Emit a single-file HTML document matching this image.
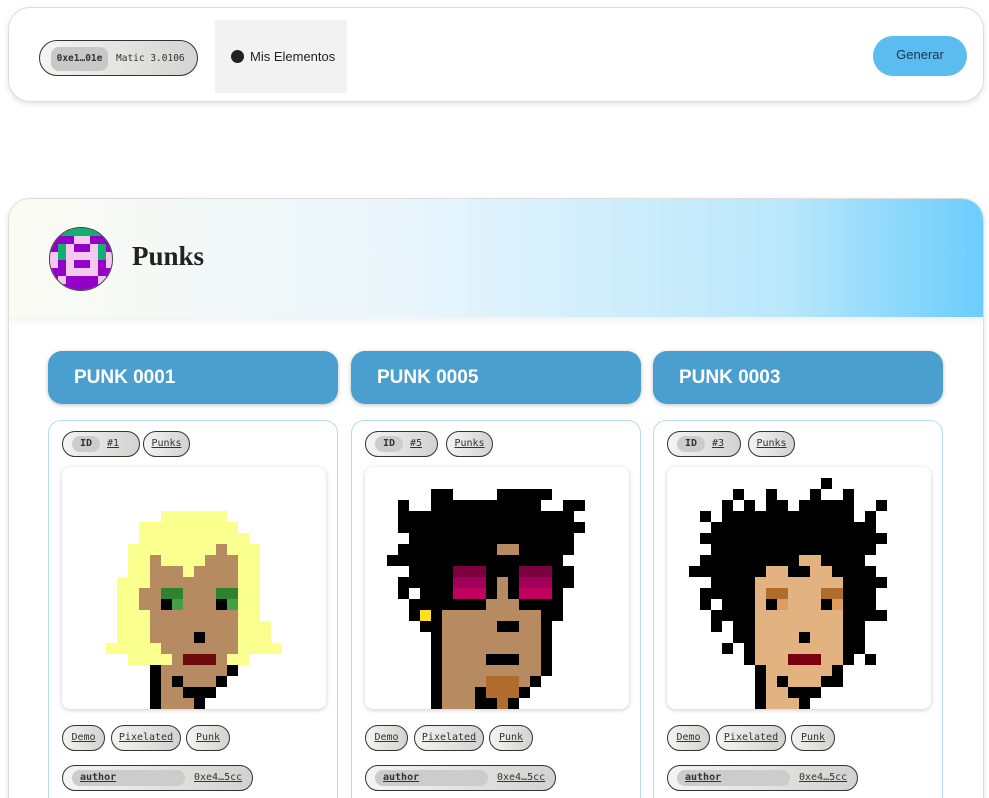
<!DOCTYPE html>
<html><head><meta charset="utf-8"><style>
*{box-sizing:border-box;margin:0;padding:0}
html,body{width:989px;height:798px;overflow:hidden}
body{background:#fff;font-family:"Liberation Sans",sans-serif;position:relative}
.top{position:absolute;left:8px;top:7px;width:976px;height:95px;border:1px solid #ddd;border-radius:22px;box-shadow:0 2px 6px rgba(0,0,0,.12);background:#fff}
.wallet{position:absolute;left:39px;top:40px;width:159px;height:36px;border:1px solid #333;border-radius:18px;background:linear-gradient(90deg,#f4f4f1,#d4d4d4);font-family:"DejaVu Sans Mono",monospace;font-size:9.5px;color:#333}
.wallet .a{position:absolute;left:11px;top:6px;width:57px;height:24px;border-radius:8px;background:#c8c8c8;text-align:center;line-height:24px;font-weight:bold}
.wallet .b{position:absolute;left:76px;top:0;line-height:36px}
.mis{position:absolute;left:215px;top:20px;width:132px;height:73px;background:#f2f2f2;font-size:13px;color:#222;line-height:73px;padding-left:35px}
.mis:before{content:"";position:absolute;left:16px;top:30px;width:13px;height:13px;border-radius:50%;background:#222}
.gen{position:absolute;left:873px;top:36px;width:94px;height:40px;border-radius:20px;background:#5bbcf0;color:#1a3550;font-size:13px;text-align:center;line-height:38px}
.main{position:absolute;left:8px;top:198px;width:976px;height:700px;border:1px solid #ddd;border-radius:22px;box-shadow:0 2px 6px rgba(0,0,0,.12);background:#fff;overflow:hidden}
.hdr{height:118px;background:linear-gradient(90deg,#fbfbf3 0%,#eaf6fc 40%,#b9e7fb 80%,#6ccdfd 100%);box-shadow:0 4px 8px rgba(0,0,0,.06);position:relative}
.av{position:absolute;left:40px;top:28px;width:64px;height:64px;border-radius:50%;overflow:hidden;border:1px solid #444}
.hdr h1{position:absolute;left:123px;top:42px;font-family:"Liberation Serif",serif;font-size:27px;font-weight:bold;color:#222}
.col{position:absolute;top:351px;width:290px}
.tb{height:53px;border-radius:14px;background:#4a9fce;color:#fff;font-weight:bold;font-size:19px;line-height:53px;padding-left:26px;box-shadow:0 1px 4px rgba(0,0,0,.25)}
.card{position:absolute;top:69px;left:0;width:290px;height:420px;border:1px solid #b5dcf0;border-radius:13px;background:#fff}
.pill{position:absolute;height:26px;border:1px solid #333;border-radius:13px;background:linear-gradient(90deg,#f4f4f1,#d2d2d2);font-family:"DejaVu Sans Mono",monospace;font-size:10px;color:#333;line-height:24px;text-align:center}
.pill u{text-decoration:underline}
.in{position:absolute;border-radius:8px;background:#ccc;font-weight:bold}
.img{position:absolute;left:13px;top:46px;width:264px;height:242px;border-radius:8px;box-shadow:0 1px 5px rgba(0,0,0,.2);overflow:hidden;background:#fff}
svg{display:block}
</style></head><body>
<div class="top">
</div>
<div class="wallet"><div class="a">0xe1…01e</div><div class="b">Matic 3.0106</div></div>
<div class="mis">Mis Elementos</div>
<div class="gen">Generar</div>

<div class="main"><div class="hdr">
<div class="av"><svg width="64" height="64" viewBox="0 0 8 8" shape-rendering="crispEdges">
<rect width="8" height="8" fill="#9300c8"/>
<rect width="8" height="1" fill="#0fb070"/>
<rect x="3" y="1" width="2" height="1" fill="#f5c8f0"/>
<rect x="1" y="2" width="1" height="2" fill="#0fb070"/><rect x="6" y="2" width="1" height="2" fill="#0fb070"/>
<rect x="0" y="3" width="1" height="2" fill="#f5c8f0"/><rect x="7" y="3" width="1" height="2" fill="#f5c8f0"/>
<rect x="2" y="3" width="4" height="1" fill="#f5c8f0"/>
<rect x="2" y="2" width="1" height="4" fill="#f5c8f0"/><rect x="5" y="2" width="1" height="4" fill="#f5c8f0"/>
<rect x="2" y="5" width="4" height="1" fill="#f5c8f0"/>
<rect x="1" y="6" width="1" height="1" fill="#f5c8f0"/><rect x="6" y="6" width="1" height="1" fill="#f5c8f0"/>
</svg></div>
<h1>Punks</h1></div></div>

<!-- column 1 -->
<div class="col" style="left:48px"><div class="tb">PUNK 0001</div>
<div class="card">
<div class="pill" style="left:13px;top:10px;width:78px;text-align:left"><span class="in" style="left:9px;top:4px;width:28px;height:16px;line-height:16px;text-align:center">ID</span><u style="margin-left:44px">#1</u></div>
<div class="pill" style="left:94px;top:10px;width:47px"><u>Punks</u></div>
<div class="img"><svg width="264" height="242" viewBox="0 0 24 22" shape-rendering="crispEdges">
<g fill="#faff8e"><rect x="9" y="4" width="6" height="1"/><rect x="7" y="5" width="9" height="1"/><rect x="7" y="6" width="10" height="1"/><rect x="6" y="7" width="12" height="3"/><rect x="5" y="10" width="13" height="4"/><rect x="5" y="14" width="14" height="2"/><rect x="4" y="16" width="16" height="1"/><rect x="6" y="17" width="11" height="1"/></g>
<g fill="#b68b62"><rect x="14" y="7" width="1" height="1"/><rect x="8" y="8" width="1" height="1"/><rect x="13" y="8" width="3" height="1"/><rect x="8" y="9" width="3" height="1"/><rect x="12" y="9" width="4" height="1"/><rect x="8" y="10" width="8" height="1"/><rect x="7" y="11" width="9" height="2"/><rect x="8" y="13" width="8" height="3"/><rect x="9" y="16" width="7" height="1"/><rect x="10" y="17" width="5" height="1"/><rect x="9" y="18" width="6" height="4"/></g>
<g fill="#000"><rect x="8" y="18" width="1" height="4"/><rect x="15" y="18" width="1" height="1"/><rect x="10" y="19" width="1" height="1"/><rect x="14" y="19" width="1" height="1"/><rect x="11" y="20" width="3" height="1"/><rect x="12" y="15" width="1" height="1"/><rect x="9" y="12" width="1" height="1"/><rect x="14" y="12" width="1" height="1"/></g>
<rect x="12" y="21" width="3" height="1" fill="#fff"/><rect x="14" y="20" width="1" height="1" fill="#fff"/><rect x="12" y="21" width="1" height="1" fill="#000"/>
<g fill="#2e8230"><rect x="9" y="11" width="2" height="1"/><rect x="14" y="11" width="2" height="1"/></g>
<g fill="#43a047"><rect x="10" y="12" width="1" height="1"/><rect x="15" y="12" width="1" height="1"/></g>
<rect x="11" y="17" width="3" height="1" fill="#6b0a0a"/>
</svg></div>
<div class="pill" style="left:13px;top:304px;width:43px"><u>Demo</u></div>
<div class="pill" style="left:62px;top:304px;width:70px"><u>Pixelated</u></div>
<div class="pill" style="left:137px;top:304px;width:44px"><u>Punk</u></div>
<div class="pill" style="left:13px;top:344px;width:191px;text-align:left"><span class="in" style="left:9px;top:4px;width:113px;height:16px;line-height:16px;padding-left:8px"><u>author</u></span><u style="margin-left:131px">0xe4…5cc</u></div>
</div></div>

<!-- column 2 -->
<div class="col" style="left:351px"><div class="tb">PUNK 0005</div>
<div class="card">
<div class="pill" style="left:13px;top:10px;width:73px;text-align:left"><span class="in" style="left:9px;top:4px;width:28px;height:16px;line-height:16px;text-align:center">ID</span><u style="margin-left:44px">#5</u></div>
<div class="pill" style="left:94px;top:10px;width:47px"><u>Punks</u></div>
<div class="img"><svg width="264" height="242" viewBox="0 0 24 22" shape-rendering="crispEdges">
<g fill="#000"><rect x="6" y="2" width="2" height="1"/><rect x="12" y="2" width="5" height="1"/><rect x="3" y="3" width="1" height="1"/><rect x="6" y="3" width="10" height="1"/><rect x="18" y="3" width="2" height="1"/><rect x="3" y="4" width="16" height="1"/><rect x="3" y="5" width="17" height="1"/><rect x="4" y="6" width="15" height="1"/><rect x="3" y="7" width="16" height="1"/><rect x="2" y="8" width="16" height="1"/><rect x="4" y="9" width="15" height="1"/><rect x="3" y="10" width="16" height="1"/><rect x="3" y="11" width="1" height="1"/><rect x="5" y="11" width="13" height="1"/><rect x="4" y="12" width="14" height="1"/><rect x="4" y="13" width="14" height="1"/><rect x="5" y="14" width="12" height="1"/><rect x="6" y="15" width="11" height="7"/></g>
<rect x="12" y="7" width="2" height="1" fill="#b68b62"/>
<g fill="#b68b62"><rect x="12" y="10" width="1" height="2"/><rect x="11" y="12" width="3" height="1"/><rect x="7" y="13" width="9" height="6"/><rect x="7" y="19" width="4" height="1"/><rect x="14" y="19" width="1" height="1"/><rect x="7" y="20" width="3" height="2"/></g>
<rect x="15" y="19" width="1" height="1" fill="#000"/><rect x="16" y="19" width="1" height="3" fill="#fff"/><rect x="15" y="20" width="1" height="2" fill="#fff"/><rect x="14" y="21" width="1" height="1" fill="#fff"/>
<rect x="5" y="13" width="1" height="1" fill="#ffe020"/>
<g fill="#000"><rect x="12" y="14" width="2" height="1"/><rect x="11" y="17" width="3" height="1"/></g>
<g fill="#b06c2a"><rect x="11" y="19" width="3" height="2"/><rect x="12" y="21" width="1" height="1"/></g>
<g fill="#7a0040"><rect x="8" y="9" width="3" height="1"/><rect x="14" y="9" width="3" height="1"/></g>
<g fill="#a0005a"><rect x="8" y="10" width="3" height="1"/><rect x="14" y="10" width="3" height="1"/></g>
<g fill="#c2005f"><rect x="8" y="11" width="3" height="1"/><rect x="14" y="11" width="3" height="1"/></g>
</svg></div>
<div class="pill" style="left:13px;top:304px;width:43px"><u>Demo</u></div>
<div class="pill" style="left:62px;top:304px;width:70px"><u>Pixelated</u></div>
<div class="pill" style="left:137px;top:304px;width:44px"><u>Punk</u></div>
<div class="pill" style="left:13px;top:344px;width:191px;text-align:left"><span class="in" style="left:9px;top:4px;width:113px;height:16px;line-height:16px;padding-left:8px"><u>author</u></span><u style="margin-left:131px">0xe4…5cc</u></div>
</div></div>

<!-- column 3 -->
<div class="col" style="left:653px"><div class="tb">PUNK 0003</div>
<div class="card">
<div class="pill" style="left:13px;top:10px;width:74px;text-align:left"><span class="in" style="left:9px;top:4px;width:28px;height:16px;line-height:16px;text-align:center">ID</span><u style="margin-left:44px">#3</u></div>
<div class="pill" style="left:94px;top:10px;width:47px"><u>Punks</u></div>
<div class="img"><svg width="264" height="242" viewBox="0 0 24 22" shape-rendering="crispEdges">
<g fill="#000"><rect x="14" y="1" width="1" height="1"/><rect x="6" y="2" width="1" height="1"/><rect x="9" y="2" width="1" height="1"/><rect x="13" y="2" width="1" height="1"/><rect x="16" y="2" width="1" height="1"/><rect x="5" y="3" width="1" height="1"/><rect x="7" y="3" width="1" height="1"/><rect x="9" y="3" width="2" height="1"/><rect x="12" y="3" width="5" height="1"/><rect x="19" y="3" width="1" height="1"/><rect x="3" y="4" width="1" height="1"/><rect x="5" y="4" width="12" height="1"/><rect x="18" y="4" width="1" height="1"/><rect x="4" y="5" width="15" height="1"/><rect x="3" y="6" width="17" height="1"/><rect x="4" y="7" width="15" height="1"/><rect x="3" y="8" width="15" height="1"/><rect x="2" y="9" width="17" height="1"/><rect x="4" y="10" width="16" height="1"/><rect x="3" y="11" width="16" height="1"/><rect x="3" y="12" width="1" height="1"/><rect x="5" y="12" width="14" height="1"/><rect x="4" y="13" width="16" height="1"/><rect x="4" y="14" width="1" height="1"/><rect x="6" y="14" width="12" height="1"/><rect x="6" y="15" width="12" height="1"/><rect x="5" y="16" width="1" height="1"/><rect x="7" y="16" width="11" height="1"/><rect x="7" y="17" width="10" height="1"/><rect x="18" y="17" width="1" height="1"/><rect x="8" y="18" width="8" height="4"/></g>
<g fill="#e2b380"><rect x="12" y="8" width="2" height="1"/><rect x="9" y="9" width="2" height="1"/><rect x="13" y="9" width="2" height="1"/><rect x="8" y="10" width="8" height="8"/><rect x="9" y="18" width="6" height="1"/><rect x="9" y="19" width="1" height="1"/><rect x="11" y="19" width="3" height="1"/><rect x="9" y="20" width="2" height="1"/><rect x="9" y="21" width="3" height="1"/></g>
<rect x="15" y="20" width="1" height="2" fill="#fff"/><rect x="14" y="20" width="1" height="2" fill="#fff"/><rect x="13" y="21" width="1" height="1" fill="#fff"/>
<g fill="#b06c2a"><rect x="9" y="11" width="2" height="1"/><rect x="14" y="11" width="2" height="1"/></g>
<g fill="#dd9c60"><rect x="10" y="12" width="1" height="1"/><rect x="15" y="12" width="1" height="1"/></g>
<g fill="#000"><rect x="9" y="12" width="1" height="1"/><rect x="14" y="12" width="1" height="1"/><rect x="12" y="15" width="1" height="1"/></g>
<rect x="11" y="17" width="3" height="1" fill="#7a0010"/>
</svg></div>
<div class="pill" style="left:13px;top:304px;width:43px"><u>Demo</u></div>
<div class="pill" style="left:62px;top:304px;width:70px"><u>Pixelated</u></div>
<div class="pill" style="left:137px;top:304px;width:44px"><u>Punk</u></div>
<div class="pill" style="left:13px;top:344px;width:191px;text-align:left"><span class="in" style="left:9px;top:4px;width:113px;height:16px;line-height:16px;padding-left:8px"><u>author</u></span><u style="margin-left:131px">0xe4…5cc</u></div>
</div></div>
</body></html>
